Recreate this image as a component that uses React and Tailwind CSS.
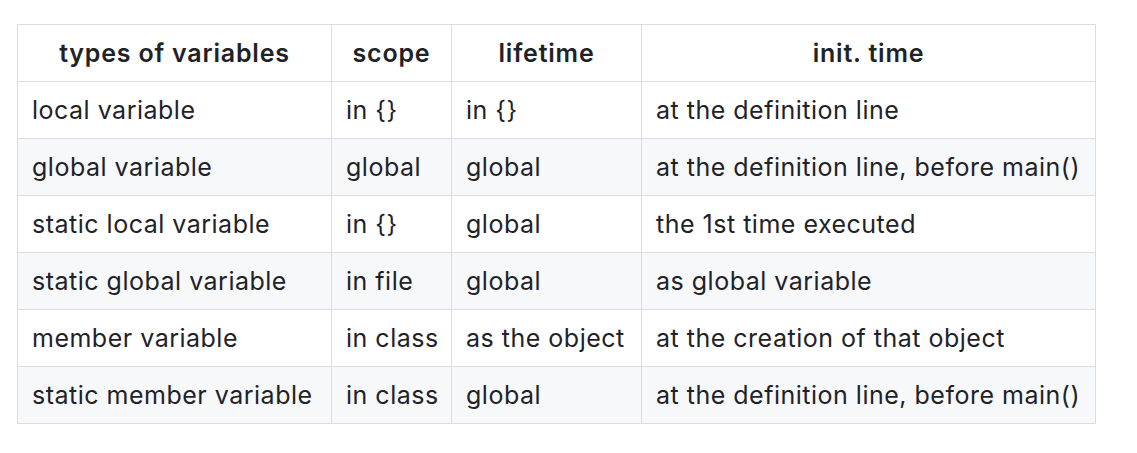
import React from "react";

const rows = [
  ["local variable", "in {}", "in {}", "at the definition line"],
  ["global variable", "global", "global", "at the definition line, before main()"],
  ["static local variable", "in {}", "global", "the 1st time executed"],
  ["static global variable", "in file", "global", "as global variable"],
  ["member variable", "in class", "as the object", "at the creation of that object"],
  ["static member variable", "in class", "global", "at the definition line, before main()"],
];

const App = () => {
  return (
    <div className="min-h-screen bg-white pl-[17px] pt-[24px] text-[#1f2328] font-['Inter','Noto_Sans',sans-serif]">
      <table className="w-[1078px] border-collapse table-fixed text-[25px] leading-[36px] tracking-[0.5px]">
        <colgroup>
          <col className="w-[314px]" />
          <col className="w-[120px]" />
          <col className="w-[190px]" />
          <col className="w-[454px]" />
        </colgroup>
        <thead>
          <tr className="bg-white">
            {["types of variables", "scope", "lifetime", "init. time"].map((h) => (
              <th
                key={h}
                className="border border-[#d8dee4] px-[14px] py-[10px] text-center font-semibold tracking-[0.8px]"
              >
                {h}
              </th>
            ))}
          </tr>
        </thead>
        <tbody>
          {rows.map((r, i) => (
            <tr key={i} className={i % 2 === 0 ? "bg-white" : "bg-[#f6f8fa]"}>
              {r.map((c, j) => (
                <td
                  key={j}
                  className="border border-[#d8dee4] px-[14px] py-[10px] text-left whitespace-nowrap"
                >
                  {c}
                </td>
              ))}
            </tr>
          ))}
        </tbody>
      </table>
    </div>
  );
};

export default App;
